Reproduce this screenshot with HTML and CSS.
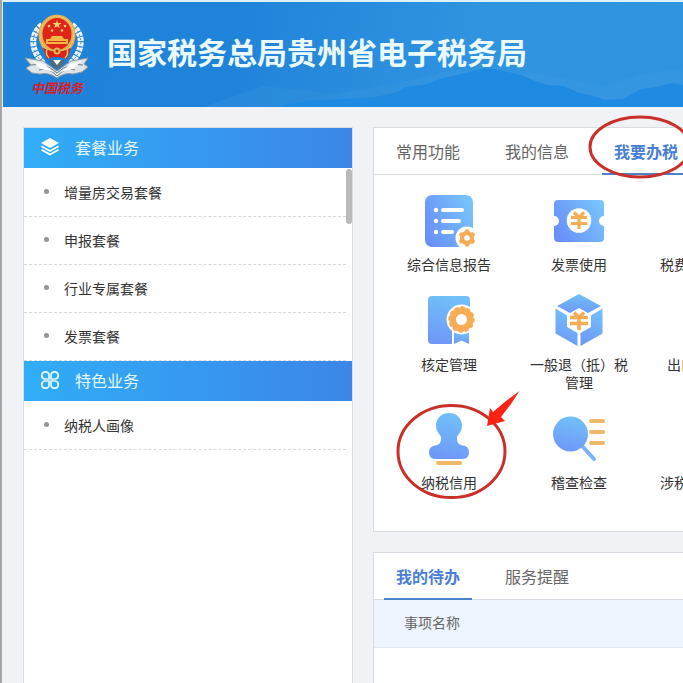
FILE: index.html
```html
<!DOCTYPE html>
<html lang="zh-CN">
<head>
  <meta charset="UTF-8" />
  <meta name="viewport" content="width=device-width, initial-scale=1" />
  <title>国家税务总局贵州省电子税务局</title>
  <link rel="stylesheet" href="styles.css">
</head>
<body>
<div class="page">

  <header class="header">
    <svg class="mountains" viewBox="0 0 680 105" preserveAspectRatio="none" aria-hidden="true">
      <path fill="#459fe4" opacity=".2" d="M200 105 L260 84 L330 92 L400 80 L450 68 L540 72 L600 84 L640 72 L680 66 V105z"/>
      <path fill="#1f8ae1" d="M280 103 L310 98 L345 97 L372 95 L395 90 L402 85 L422 83 L436 77 L455 73 L473 68 L485 66 L500 69 L518 73 L532 79 L545 83 L560 84 L577 91 L590 94 L602 98 L620 97 L638 87 L654 85 L668 81 L680 83 V105 H280z"/>
    </svg>

    <svg class="emblem" viewBox="0 0 68 86" role="img" aria-label="中国税务">
      <!-- wheat on both sides -->
      <g fill="none" stroke="#eef5fa" stroke-width="6" stroke-dasharray="4 1">
        <path d="M19 13 C7 22 7 38 21 52"/>
        <path d="M49 13 C61 22 61 38 47 52"/>
      </g>
      <g fill="none" stroke="#6f8795" stroke-width="1" stroke-dasharray="2 2">
        <path d="M19 13 C7 22 7 38 21 52"/>
        <path d="M49 13 C61 22 61 38 47 52"/>
      </g>
      <!-- ribbon -->
      <path fill="#dfe4e6" stroke="#8c9aa3" d="M2 46 L20 49 L34 59 L48 49 L65 46 L61 52 L65 55 L59 60 L50 62 Q42 60 34 66 Q26 60 17 62 L9 61 L3 56 L8 53z"/>
      <path fill="none" stroke="#6d7e89" stroke-width="1" d="M8 53 Q22 50 34 61 Q46 50 60 53 M16 58 Q26 55 34 64 Q43 55 52 58"/>
      <path fill="#fff" d="M8 48 L21 52 L31 60 L18 57z M60 48 L47 52 L38 60 L50 57z"/>
      <path fill="#536c7c" d="M26 48 H42 L39 54 L34 57 L29 54z"/>
      <path fill="#fff" d="M30 48 L34 53 L38 48z"/>
      <!-- national emblem -->
      <ellipse cx="34" cy="23" rx="18.500" ry="20.500" fill="#e5b04d"/>
      <ellipse cx="34" cy="23" rx="16.500" ry="18.500" fill="none" stroke="#f4d27a" stroke-width="1" stroke-dasharray="2 1"/>
      <ellipse cx="34" cy="22" rx="14.500" ry="16" fill="#df2419"/>
      <path fill="#ffd970" d="M34 8 L35 11 H38.500 L35.800 13 L36.800 16 L34 14.200 L31.200 16 L32.200 13 L29.500 11 H33z"/>
      <g fill="#ffd970"><circle cx="26" cy="14" r="1.300"/><circle cx="29" cy="18.500" r="1.300"/><circle cx="39" cy="18.500" r="1.300"/><circle cx="42" cy="14" r="1.300"/></g>
      <path fill="#f2b944" d="M29 24 H39 L41 27 H45 V32 H23 V27 H27z"/>
      <path fill="#d9301c" d="M25 29 H43 V30 H25z"/>
      <path fill="#d7231a" d="M20 36 Q34 43 48 36 L44 47 Q34 43 24 47z"/>
      <circle cx="34" cy="39" r="3.500" fill="#e8b34c"/><circle cx="34" cy="39" r="1.500" fill="#b5341e"/>
      <path fill="none" stroke="#f0c15a" stroke-width="1.500" d="M24 37 Q22 42 26 46 M44 37 Q46 42 42 46"/>
      <text class="emblem-text" x="34" y="81" text-anchor="middle">中国税务</text>
    </svg>

    <h1 class="site-title">国家税务总局贵州省电子税务局</h1>
  </header>

  <div class="content">
    <aside class="sidebar">
      <h2 class="side-head">
        <svg width="20" height="18" viewBox="0 0 20 18" aria-hidden="true">
          <path fill="#fff" d="M10 0 L19 5 L10 10 L1 5z"/>
          <path fill="none" stroke="#fff" stroke-width="1.800" d="M1.500 8.300 L10 13 L18.500 8.300 M1.500 11.800 L10 16.500 L18.500 11.800"/>
        </svg>
        套餐业务
      </h2>
      <div class="side-scroll">
        <ul class="side-list">
          <li><a href="#">增量房交易套餐</a></li>
          <li><a href="#">申报套餐</a></li>
          <li><a href="#">行业专属套餐</a></li>
          <li><a href="#">发票套餐</a></li>
        </ul>
        <span class="thumb"></span>
      </div>
      <h2 class="side-head">
        <svg width="20" height="18" viewBox="0 0 20 18" aria-hidden="true">
          <g fill="none" stroke="#e2f8ff" stroke-width="1.700">
            <path d="M9 8 H5 A3.600 3.600 0 1 1 9 4.500z"/>
            <path d="M11 8 H15 A3.600 3.600 0 1 0 11 4.500z"/>
            <path d="M9 10 H5 A3.600 3.600 0 1 0 9 13.500z"/>
            <path d="M11 10 H15 A3.600 3.600 0 1 1 11 13.500z"/>
          </g>
        </svg>
        特色业务
      </h2>
      <ul class="side-list">
        <li><a href="#">纳税人画像</a></li>
      </ul>
    </aside>

    <main class="main">
      <section class="panel">
        <nav class="tabs">
          <button type="button" class="tab">常用功能</button>
          <button type="button" class="tab">我的信息</button>
          <button type="button" class="tab active">我要办税</button>
        </nav>

        <div class="grid">
          <a class="item" href="#">
            <svg class="icon" viewBox="0 0 52 52" aria-hidden="true">
              <defs>
                <linearGradient id="blue" x1="0" y1="0.700" x2="1" y2="0.200">
                  <stop offset="0" stop-color="#6a8ff8"/><stop offset="1" stop-color="#77c5fc"/>
                </linearGradient>
                <linearGradient id="blueDown" x1="0.600" y1="0" x2="0.400" y2="1">
                  <stop offset="0" stop-color="#71c1f8"/><stop offset="1" stop-color="#6f98f8"/>
                </linearGradient>
              </defs>
              <rect x="2" width="48" height="52" rx="7" fill="url(#blue)"/>
              <g fill="#fff">
                <circle cx="13" cy="15" r="2.200"/><circle cx="13" cy="26" r="2.200"/><circle cx="13" cy="37" r="2.200"/>
                <rect x="18" y="13" width="23" height="4" rx="2"/>
                <rect x="18" y="24" width="20" height="4" rx="2"/>
                <rect x="18" y="35" width="13" height="4" rx="2"/>
                <circle cx="44" cy="43" r="11.500"/>
              </g>
              <circle cx="44" cy="43" r="7" fill="#f7ad55"/>
              <path stroke="#f7ad55" stroke-width="4.500" stroke-linecap="round" d="M44 36.500 V49.500 M38.400 39.700 L49.600 46.300 M38.400 46.300 L49.600 39.700"/>
              <circle cx="44" cy="43" r="2.800" fill="#fff"/>
            </svg>
            <span class="label">综合信息报告</span>
          </a>

          <a class="item" href="#">
            <svg class="icon" viewBox="0 0 52 52" aria-hidden="true">
              <path fill="url(#blue)" d="M5 5 H47 Q51 5 51 9 V21 A5 5 0 0 0 51 31 V43 Q51 47 47 47 H5 Q1 47 1 43 V31 A5 5 0 0 0 1 21 V9 Q1 5 5 5z"/>
              <circle cx="26" cy="25.500" r="12.300" fill="#fff"/>
              <path fill="none" stroke="#f7ad55" stroke-width="3.200" d="M21 17.500 L26 22.500 L31 17.500 M18 22.500 H34 M18 28.500 H34 M26 22 V34"/>
            </svg>
            <span class="label">发票使用</span>
          </a>

          <a class="item" href="#">
            <svg class="icon" viewBox="0 0 52 52" aria-hidden="true">
              <rect x="2" y="4" width="48" height="44" rx="6" fill="url(#blue)"/>
              <circle cx="26" cy="26" r="11" fill="#fff"/>
            </svg>
            <span class="label">税费申报及缴纳</span>
          </a>

          <a class="item" href="#">
            <svg class="icon" viewBox="0 0 52 52" aria-hidden="true">
              <path fill="url(#blueDown)" d="M9 1 H43 Q47 1 47 5 V49 H9 Q5 49 5 45 V5 Q5 1 9 1z"/>
              <path fill="#fff" d="M29 34 H50 V50 H29z"/>
              <path fill="url(#blueDown)" d="M31 36 H46 V49 L38.500 45.500 L31 49z"/>
              <circle cx="38.500" cy="24.500" r="15" fill="#fff"/>
              <circle cx="38.500" cy="24.500" r="12" fill="#f7ad55"/>
              <circle cx="38.500" cy="24.500" r="11.500" fill="none" stroke="#f7ad55" stroke-width="3.400" stroke-linecap="round" stroke-dasharray="1.500 4.520"/>
              <circle cx="38.500" cy="24.500" r="5.500" fill="#fff"/>
            </svg>
            <span class="label">核定管理</span>
          </a>

          <a class="item" href="#">
            <svg class="icon" viewBox="0 0 52 52" aria-hidden="true">
              <path fill="url(#blueDown)" d="M26 -1 L48 11 L35 18 L26 13 L17 18 L4 11z"/>
              <path fill="url(#blueDown)" d="M2.500 13.500 L14 20.500 V32 L24.500 38 V51 L2.500 38.500z"/>
              <path fill="url(#blueDown)" d="M49.500 13.500 L38 20.500 V32 L27.500 38 V51 L49.500 38.500z"/>
              <path fill="none" stroke="#f7ad55" stroke-width="3.600" d="M21 17.500 L26 22.500 L31 17.500 M17 22.500 H35 M17 28.500 H35 M26 22 V35"/>
            </svg>
            <span class="label">一般退（抵）税管理</span>
          </a>

          <a class="item" href="#">
            <svg class="icon" viewBox="0 0 52 52" aria-hidden="true">
              <rect x="2" y="2" width="44" height="48" rx="6" fill="url(#blueDown)"/>
              <path fill="none" stroke="#fff" stroke-width="4" d="M14 26 H38 M30 18 L38 26 L30 34"/>
            </svg>
            <span class="label">出口退税管理</span>
          </a>

          <a class="item" href="#">
            <svg class="icon" viewBox="0 0 52 52" aria-hidden="true">
              <path fill="url(#blueDown)" d="M26 0 C34 0 39 6 39 12.500 C39 20 34 21 34 25 C34 30 36 32 40 32.500 C44 33 46 36 46 39 C46 43 44 46 40 46 H12 C8 46 6 43 6 39 C6 36 8 33 12 32.500 C16 32 18 30 18 25 C18 21 13 20 13 12.500 C13 6 18 0 26 0z"/>
              <rect x="13" y="48" width="26" height="4" rx="2" fill="#f0b768"/>
            </svg>
            <span class="label">纳税信用</span>
          </a>

          <a class="item" href="#">
            <svg class="icon" viewBox="0 0 52 52" aria-hidden="true">
              <path stroke="#78b4f6" stroke-width="4" stroke-linecap="round" d="M30 34 L41 46"/>
              <circle cx="17.500" cy="21" r="17.500" fill="url(#blueDown)"/>
              <g fill="#f0b768">
                <rect x="36" y="6" width="16" height="4" rx="2"/>
                <rect x="36" y="17" width="16" height="4" rx="2"/>
                <rect x="36" y="28" width="16" height="4" rx="2"/>
              </g>
            </svg>
            <span class="label">稽查检查</span>
          </a>

          <a class="item" href="#">
            <svg class="icon" viewBox="0 0 52 52" aria-hidden="true">
              <circle cx="26" cy="14" r="12" fill="url(#blueDown)"/>
              <path fill="url(#blueDown)" d="M4 50 Q4 30 26 30 Q48 30 48 50z"/>
            </svg>
            <span class="label">涉税专业服务机构管理</span>
          </a>
        </div>
      </section>

      <section class="panel todo">
        <nav class="tabs">
          <button type="button" class="tab active">我的待办</button>
          <button type="button" class="tab">服务提醒</button>
        </nav>
        <table class="table">
          <thead>
            <tr><th>事项名称</th></tr>
          </thead>
        </table>
      </section>
    </main>
  </div>

  <!-- red marks over the page -->
  <svg class="marks" width="800" height="683" viewBox="0 0 800 683" aria-hidden="true">
    <g fill="none" stroke="#cb2f2a" stroke-width="3">
      <ellipse cx="640" cy="147" rx="50" ry="30"/>
      <ellipse cx="451.500" cy="451.500" rx="53.500" ry="46"/>
    </g>
    <path fill="#fb2414" d="M519.500 391 L511 404 L501 417 L505 421 L487 426 L490 408 L493 412 L506 401z"/>
  </svg>
</div>
</body>
</html>
```

FILE: styles.css
```css
* {
  margin: 0;
  padding: 0;
  box-sizing: border-box;
}

body {
  font-family: "Noto Sans CJK SC", "Noto Sans", sans-serif;
  font-size: 14px;
  color: #333;
  background: #f0f2f5;
  overflow: hidden;
}

a {
  color: inherit;
  text-decoration: none;
}

.page {
  position: relative;
  display: flex;
  flex-direction: column;
  min-width: 1100px;
  min-height: 100vh;
  border-left: 2px solid #a5a5a5;
}

/* header */
.header {
  position: relative;
  display: flex;
  align-items: center;
  gap: 16px;
  height: 107px;
  padding-left: 20px;
  border-top: 2px solid #dff1f8;
  border-left: 1px solid #e4f4fa;
  background: linear-gradient(100deg, #1e82d9 0, #2083da 230px, #3194e0 480px, #3093df 680px);
}

.mountains {
  position: absolute;
  left: 0;
  bottom: 0;
  width: 680px;
  height: 105px;
}

.emblem {
  position: relative;
  width: 68px;
  height: 86px;
}

.emblem-text {
  font-size: 13px;
  font-style: italic;
  font-weight: bold;
  fill: #d3202c;
}

.site-title {
  position: relative;
  padding-bottom: 8px;
  font-size: 30px;
  line-height: 40px;
  font-weight: bold;
  color: #eafaff;
}

.content {
  flex: 1;
  display: flex;
  gap: 20px;
  padding: 20px 20px 0 21px;
}

/* left menu */
.sidebar {
  flex: none;
  width: 330px;
  background: #fff;
  border: 1px solid #d9dde3;
  border-bottom: none;
}

.side-head {
  display: flex;
  align-items: center;
  gap: 15px;
  height: 41px;
  padding: 0 0 2px 16px;
  border-bottom: 1px solid #fff;
  background: linear-gradient(90deg, #31adf7, #3c86e8);
  background-clip: padding-box;
  font-size: 16px;
  font-weight: normal;
  color: #e4f8ff;
}

.side-scroll {
  position: relative;
}

.thumb {
  position: absolute;
  top: 0;
  right: 0;
  width: 6px;
  height: 55px;
  border-radius: 3px;
  background: #b9b9b9;
}

.side-list {
  margin-right: 6px;
  list-style: none;
}

.side-list li {
  height: 48px;
  border-bottom: 1px dashed #d8d8d8;
}

.side-list a {
  display: flex;
  align-items: center;
  gap: 15px;
  height: 100%;
  padding: 0 0 2px 20px;
}

.side-list a::before {
  content: "";
  width: 5px;
  height: 5px;
  border-radius: 50%;
  background: #959595;
}

/* right side */
.main {
  flex: 1;
  display: flex;
  flex-direction: column;
  gap: 20px;
}

.panel {
  background: #fff;
  border: 1px solid #d9dde3;
}

.todo {
  flex: 1;
  border-bottom: none;
}

.tabs {
  display: flex;
  gap: 21px;
  height: 47px;
  padding-left: 10px;
  border-bottom: 1px solid #d9dde3;
}

.tab {
  height: 47px;
  padding: 0 12px;
  border: none;
  border-bottom: 2px solid transparent;
  background: none;
  font-family: inherit;
  font-size: 16px;
  color: #666;
  cursor: pointer;
}

.tab.active {
  border-bottom-color: #4b83c9;
  font-weight: bold;
  color: #4a7fd4;
}

.grid {
  display: grid;
  grid-template-columns: repeat(3, 130px);
  row-gap: 22px;
  padding: 20px 10px 22px;
}

.item {
  display: flex;
  flex-direction: column;
  align-items: center;
  gap: 8px;
}

.icon {
  width: 52px;
  height: 52px;
  overflow: visible;
}

.label {
  width: 98px;
  line-height: 18px;
  text-align: center;
}

.table {
  width: 100%;
  border-collapse: collapse;
}

.table th {
  height: 47px;
  padding: 0 0 2px 30px;
  border-bottom: 1px solid #e3e8ee;
  background: #edf4fd;
  font-weight: normal;
  text-align: left;
  color: #666;
}

/* overlay */
.marks {
  position: absolute;
  top: 0;
  left: -2px;
  pointer-events: none;
}
```
